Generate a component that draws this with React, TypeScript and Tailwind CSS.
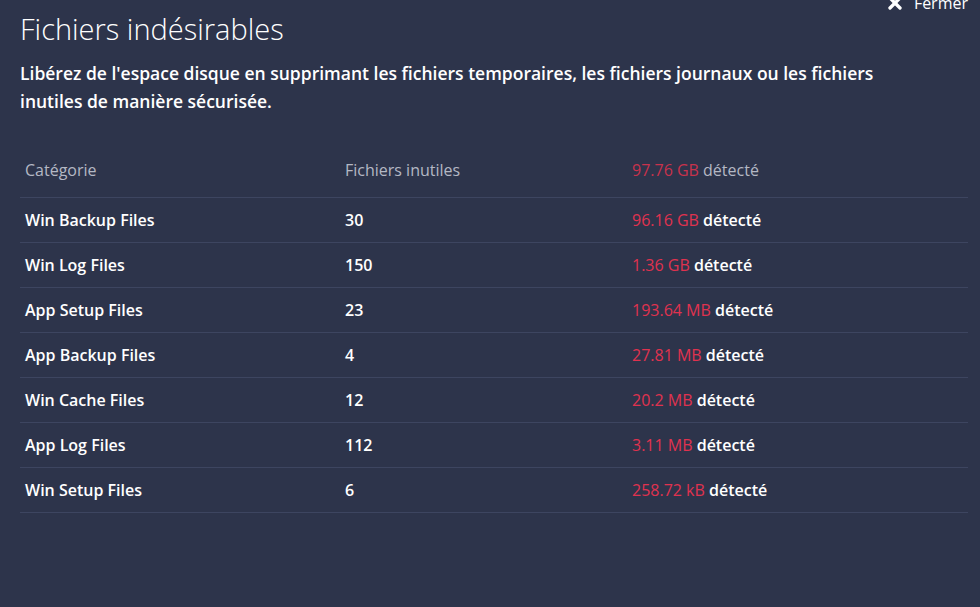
import { X } from "lucide-react";

const rows = [
  { name: "Win Backup Files", count: "30", size: "96.16 GB" },
  { name: "Win Log Files", count: "150", size: "1.36 GB" },
  { name: "App Setup Files", count: "23", size: "193.64 MB" },
  { name: "App Backup Files", count: "4", size: "27.81 MB" },
  { name: "Win Cache Files", count: "12", size: "20.2 MB" },
  { name: "App Log Files", count: "112", size: "3.11 MB" },
  { name: "Win Setup Files", count: "6", size: "258.72 kB" },
];

export default function App() {
  return (
    <div className="relative w-[980px] h-[607px] overflow-hidden bg-[#2d344b] text-white font-['Open_Sans','Liberation_Sans',sans-serif]">
      {/* Close */}
      <button className="absolute top-[-9px] right-[12px] flex items-center gap-[9px] text-white text-[16px]">
        <X size={20} strokeWidth={4} />
        Fermer
      </button>

      <div className="px-5 pt-[11px]">
        <h1 className="text-[29px] font-light leading-[36px] text-white">Fichiers indésirables</h1>
        <p className="mt-[12px] w-[890px] text-[17.5px] font-semibold leading-[28px] text-white">
          Libérez de l'espace disque en supprimant les fichiers temporaires, les fichiers journaux ou les fichiers inutiles de manière sécurisée.
        </p>

        <div className="mt-[37px] w-[948px] text-[16px]">
          <div className="flex h-[46px] items-center border-b border-[#3d4560] pb-[10px] text-[#b4b8c4]">
            <div className="w-[320px] pl-[5px]">Catégorie</div>
            <div className="w-[287px] pl-[5px]">Fichiers inutiles</div>
            <div className="flex-1 pl-[5px]">
              <span className="text-[#c8324c]">97.76 GB</span> détecté
            </div>
          </div>
          {rows.map((r) => (
            <div key={r.name} className="flex h-[45px] items-center border-b border-[#3d4560] font-semibold">
              <div className="w-[320px] pl-[5px]">{r.name}</div>
              <div className="w-[287px] pl-[5px]">{r.count}</div>
              <div className="flex-1 pl-[5px]">
                <span className="font-normal text-[#e0324f]">{r.size}</span> détecté
              </div>
            </div>
          ))}
        </div>
      </div>
    </div>
  );
}
